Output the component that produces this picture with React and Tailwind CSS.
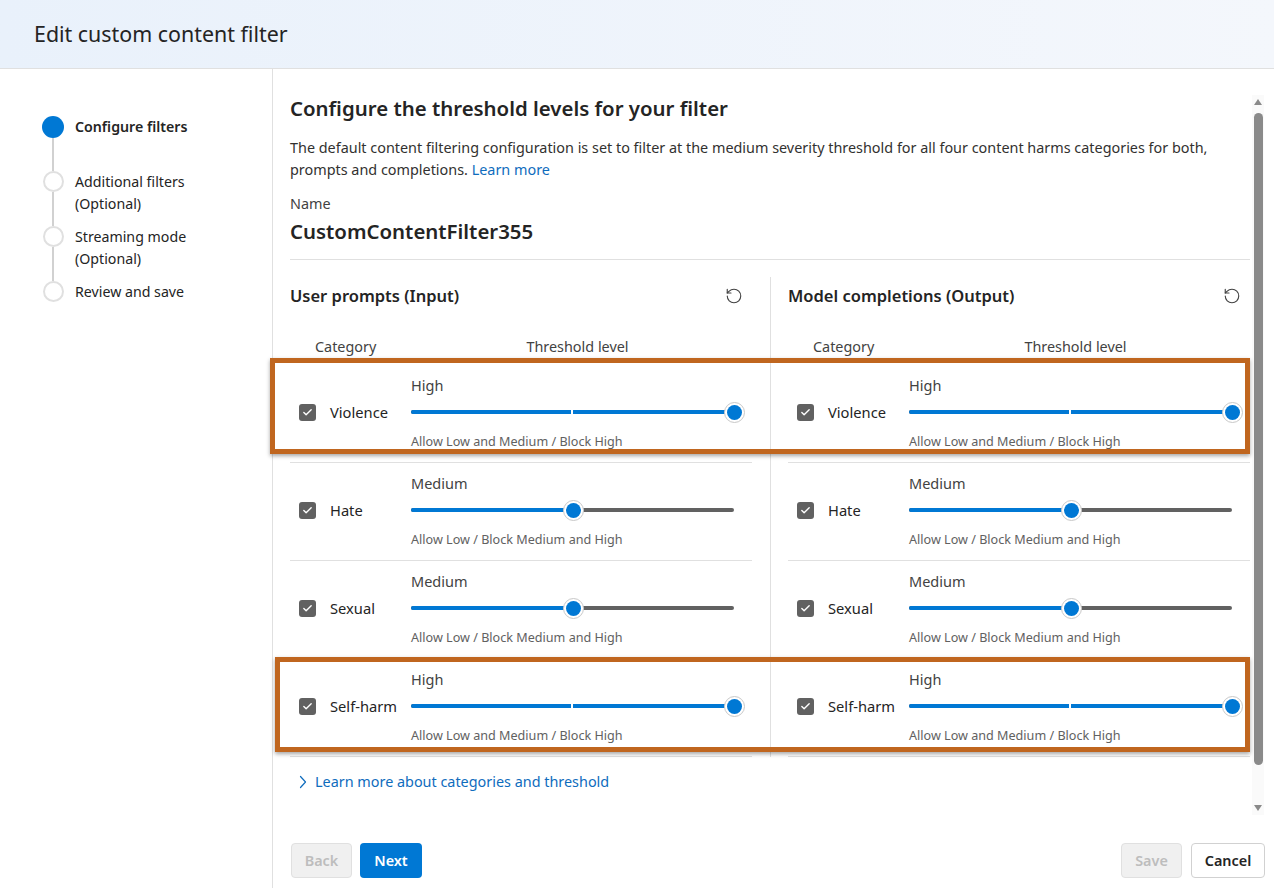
import React from "react";
import { Check, RotateCcw } from "lucide-react";

const rows = [
  { name: "Violence", level: "High", value: 1, desc: "Allow Low and Medium / Block High" },
  { name: "Hate", level: "Medium", value: 0.5, desc: "Allow Low / Block Medium and High" },
  { name: "Sexual", level: "Medium", value: 0.5, desc: "Allow Low / Block Medium and High" },
  { name: "Self-harm", level: "High", value: 1, desc: "Allow Low and Medium / Block High" },
];

function Slider({ value }) {
  const trackW = 323;
  const pos = value * trackW;
  return (
    <div className="relative h-[20px] w-[333px]">
      <div className="absolute left-0 top-[8px] h-[4px] w-[323px] rounded-full bg-[#616161]" />
      <div
        className="absolute left-0 top-[8px] h-[4px] rounded-full bg-[#0078d4]"
        style={{ width: pos }}
      />
      {value === 1 && <div className="absolute left-[160px] top-[8px] h-[4px] w-[2px] bg-white" />}
      <div
        className="absolute top-0 flex h-[21px] w-[21px] items-center justify-center rounded-full border border-[#c8c8c8] bg-white"
        style={{ left: pos - 10 }}
      >
        <div className="h-[15px] w-[15px] rounded-full bg-[#0078d4]" />
      </div>
    </div>
  );
}

function Row({ r }) {
  return (
    <div className="flex border-b border-[#e0e0e0] pt-[10px] pb-[12px]">
      <div className="mt-[27px] flex h-[20px] w-[121px] items-center pl-[9px]">
        <div className="flex h-[17px] w-[17px] items-center justify-center rounded-[3px] bg-[#616161]">
          <Check size={11} strokeWidth={3} color="#ffffff" />
        </div>
        <span className="ml-[14px] text-[14.7px] leading-[20px] text-[#242424]">{r.name}</span>
      </div>
      <div className="flex flex-col">
        <div className="text-[14.5px] leading-[20px] text-[#424242]">{r.level}</div>
        <div className="mt-[7px]">
          <Slider value={r.value} />
        </div>
        <div className="mt-[12px] text-[12.6px] leading-[16px] text-[#616161]">{r.desc}</div>
      </div>
    </div>
  );
}

function Column({ title, left }) {
  return (
    <div className={left ? "border-r border-[#e0e0e0] pr-[18px]" : "pl-[17px]"}>
      <div className="flex items-center justify-between pt-[8px] pr-[9px]">
        <span className="text-[16.5px] font-semibold leading-[22px] text-[#242424]">{title}</span>
        <RotateCcw size={18} strokeWidth={1.5} color="#424242" />
      </div>
      <div className="mt-[30px] flex text-[14.4px] leading-[20px] text-[#424242]">
        <div className="w-[121px] pl-[25px]">Category</div>
        <div className="w-[333px] text-center">Threshold level</div>
      </div>
      <div className="mt-[8px]">
        {rows.map((r) => (
          <Row key={r.name} r={r} />
        ))}
      </div>
    </div>
  );
}

function Step({ label, sub, active, last }) {
  return (
    <div className={last ? "flex" : "flex h-[55px]"}>
      <div className="flex w-[22px] flex-col items-center">
        {active ? (
          <div className="h-[22px] w-[22px] shrink-0 rounded-full bg-[#0078d4]" />
        ) : (
          <div className="h-[21px] w-[21px] shrink-0 rounded-full border-2 border-[#e0e0e0] bg-white" />
        )}
        {!last && <div className="w-[2px] flex-1 bg-[#d1d1d1]" />}
      </div>
      <div className="ml-[11px] text-[14.2px] leading-[22px] text-[#242424]">
        <div className={active ? "font-semibold" : ""}>{label}</div>
        {sub && <div>{sub}</div>}
      </div>
    </div>
  );
}

export default function App() {
  return (
    <div className="relative flex h-[888px] w-[1274px] flex-col overflow-hidden bg-white font-['Segoe_UI','Noto_Sans',sans-serif] text-[#242424]">
      <div className="flex h-[69px] shrink-0 items-center border-b border-[#e0e0e0] bg-gradient-to-r from-[#e9f1fb] to-[#f4f7fc] px-[34px]">
        <h1 className="text-[21.4px] leading-[28px] text-[#242424]">Edit custom content filter</h1>
      </div>
      <div className="flex min-h-0 flex-1">
        <div className="w-[273px] shrink-0 border-r border-[#e0e0e0] pl-[42px] pt-[47px]">
          <Step label="Configure filters" active />
          <Step label="Additional filters" sub="(Optional)" />
          <Step label="Streaming mode" sub="(Optional)" />
          <Step label="Review and save" last />
        </div>
        <div className="flex min-w-0 flex-1 flex-col">
          <div className="flex min-h-0 flex-1">
            <div className="flex-1 pl-[17px] pt-[25px]">
              <h2 className="text-[20.4px] font-semibold leading-[28px] text-[#242424]">
                Configure the threshold levels for your filter
              </h2>
              <p className="mt-[15px] text-[14.4px] leading-[22px] text-[#323130]">
                The default content filtering configuration is set to filter at the medium severity threshold for all four content harms categories for both, prompts and completions.{" "}
                <span className="text-[#0f6cbd]">Learn more</span>
              </p>
              <div className="mt-[13px] text-[14.4px] leading-[20px] text-[#424242]">Name</div>
              <div className="mt-[3px] text-[20.4px] font-semibold leading-[28px] text-[#242424]">
                CustomContentFilter355
              </div>
              <div className="mt-[14px] h-px bg-[#e0e0e0]" />
              <div className="mt-[17px] grid grid-cols-[481px_479px]">
                <Column title="User prompts (Input)" left />
                <Column title="Model completions (Output)" />
              </div>
              <div className="mt-[15px] flex items-center pl-[9px] text-[14.4px] leading-[20px] text-[#0f6cbd]">
                <svg width="8" height="14" viewBox="0 0 8 14" fill="none">
                  <path d="M1.5 1.5 L6.5 7 L1.5 12.5" stroke="#0f6cbd" strokeWidth="1.2" strokeLinecap="round" strokeLinejoin="round" />
                </svg>
                <span className="ml-[8px]">Learn more about categories and threshold</span>
              </div>
            </div>
            <div className="flex w-[24px] shrink-0 flex-col items-start pl-[2px] pt-[26px] pb-[5px]">
              <div className="flex w-[12px] flex-1 flex-col items-center bg-[#fafafa]">
                <svg width="8" height="6" viewBox="0 0 8 6" className="mt-[4px]">
                  <path d="M4 0 L8 6 L0 6 Z" fill="#8a8a8a" />
                </svg>
                <div className="mt-[8px] h-[652px] w-[9px] rounded-full bg-[#8a8a8a]" />
                <div className="flex-1" />
                <svg width="8" height="6" viewBox="0 0 8 6" className="mb-[4px]">
                  <path d="M0 0 L8 0 L4 6 Z" fill="#8a8a8a" />
                </svg>
              </div>
            </div>
          </div>
          <div className="flex h-[68px] shrink-0 items-start justify-between pl-[18px] pr-[9px] pt-[23px]">
            <div className="flex gap-[8px]">
              <button className="h-[35px] w-[61px] rounded-[4px] border border-[#e0e0e0] bg-[#f0f0f0] text-[14.4px] font-semibold text-[#bdbdbd]">
                Back
              </button>
              <button className="h-[35px] w-[62px] rounded-[4px] bg-[#0078d4] text-[14.4px] font-semibold text-white">
                Next
              </button>
            </div>
            <div className="flex gap-[9px]">
              <button className="h-[35px] w-[61px] rounded-[4px] border border-[#e0e0e0] bg-[#f0f0f0] text-[14.4px] font-semibold text-[#bdbdbd]">
                Save
              </button>
              <button className="h-[35px] w-[74px] rounded-[4px] border border-[#d1d1d1] bg-white text-[14.4px] font-semibold text-[#242424]">
                Cancel
              </button>
            </div>
          </div>
        </div>
      </div>
      <div className="pointer-events-none absolute left-[270px] top-[358px] h-[96px] w-[980px] border-[5px] border-[#c0661f] shadow-[0_2px_4px_rgba(0,0,0,0.35)]" />
      <div className="pointer-events-none absolute left-[275px] top-[657px] h-[95px] w-[975px] border-[5px] border-[#c0661f] shadow-[0_2px_4px_rgba(0,0,0,0.35)]" />
    </div>
  );
}
